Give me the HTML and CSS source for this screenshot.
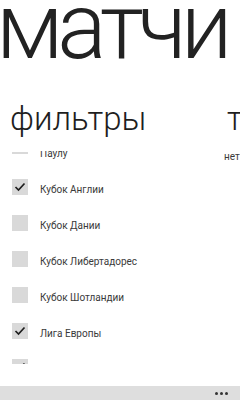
FILE: index.html
```html
<!DOCTYPE html>
<html lang="ru">
<head>
<meta charset="utf-8">
<link rel="stylesheet" href="styles.css">
</head>
<body>
<div class="phone">
  <h1 class="title">матчи</h1>
  <div class="pivot">
    <section class="pane pane-filters">
      <h2 class="pane-header">фильтры</h2>
      <div class="viewport">
        <ul class="list">
          <li class="item"><span class="cb cb-peek"></span><span class="label">Паулу</span></li>
          <li class="item"><span class="cb"><svg viewBox="0 0 16 16" class="check"><polyline points="3.5,8 6.5,11 12.5,4.5"/></svg></span><span class="label">Кубок Англии</span></li>
          <li class="item"><span class="cb"></span><span class="label">Кубок Дании</span></li>
          <li class="item"><span class="cb"></span><span class="label">Кубок Либертадорес</span></li>
          <li class="item"><span class="cb"></span><span class="label">Кубок Шотландии</span></li>
          <li class="item"><span class="cb"><svg viewBox="0 0 16 16" class="check"><polyline points="3.5,8 6.5,11 12.5,4.5"/></svg></span><span class="label">Лига Европы</span></li>
          <li class="item"><span class="cb"><svg viewBox="0 0 16 16" class="check"><polyline points="3.5,8 6.5,11 12.5,4.5"/></svg></span><span class="label">Лига Чемпионов</span></li>
        </ul>
      </div>
    </section>
    <section class="pane pane-next">
      <h2 class="pane-header">таблица</h2>
      <p class="empty">нет данных</p>
    </section>
  </div>
  <div class="spacer"></div>
  <footer class="appbar"><span class="dots"><i></i><i></i><i></i></span></footer>
</div>
</body>
</html>
```
FILE: styles.css
```css
html, body {
  margin: 0;
  padding: 0;
  background: #ffffff;
}
.phone {
  width: 240px;
  height: 400px;
  overflow: hidden;
  display: flex;
  flex-direction: column;
  font-family: Roboto, "Noto Sans", sans-serif;
  color: #1e1e1e;
}
.title {
  margin: -19px 0 0 -4px;
  height: 114px;
  font-size: 92px;
  font-weight: 300;
  line-height: 92px;
  letter-spacing: -6px;
  white-space: nowrap;
  color: #222;
}
.pivot {
  display: flex;
  height: 269px;
  overflow: hidden;
  white-space: nowrap;
}
.pane {
  flex: none;
  display: flex;
  flex-direction: column;
}
.pane-filters {
  width: 214px;
  padding-left: 10px;
}
.pane-header {
  margin: 0;
  box-sizing: border-box;
  height: 56px;
  padding-top: 8px;
  font-size: 33px;
  font-weight: 300;
  line-height: 32px;
}
.viewport {
  height: 213px;
  overflow: hidden;
}
.list {
  list-style: none;
  margin: -18px 0 0 2px;
  padding: 0;
}
.item {
  height: 36px;
  display: flex;
  align-items: center;
  gap: 12px;
}
.cb {
  width: 16px;
  height: 16px;
  background: #d9d9d9;
  flex: none;
  display: flex;
}
.cb-peek {
  background: linear-gradient(#fff 0 9px, #d9d9d9 9px 11px, #fff 11px);
}
.check {
  width: 16px;
  height: 16px;
  fill: none;
  stroke: #1e1e1e;
  stroke-width: 1.7;
}
.label {
  margin-top: 5px;
  font-size: 10px;
  color: #3a3a3a;
}
.pane-next {
  padding-left: 2px;
}
.pane-next .pane-header {
  margin-left: 1px;
}
.empty {
  margin: 0 0 0 -2px;
  font-size: 10px;
  color: #3a3a3a;
}
.spacer {
  flex: 1;
}
.appbar {
  height: 14px;
  background: #dedede;
  display: flex;
  justify-content: flex-end;
  align-items: center;
  padding-right: 12px;
}
.dots {
  display: flex;
  gap: 2px;
}
.dots i {
  width: 3px;
  height: 3px;
  border-radius: 50%;
  background: #333;
}
```
